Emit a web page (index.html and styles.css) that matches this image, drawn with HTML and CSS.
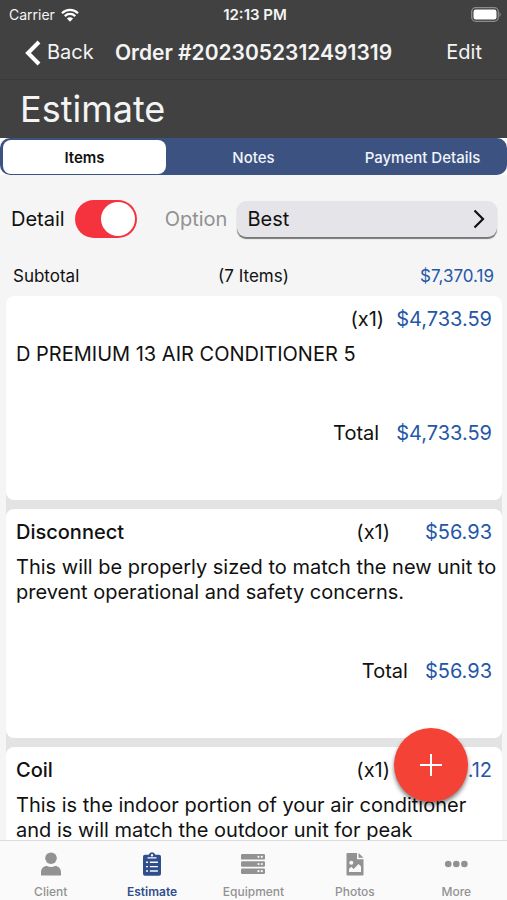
FILE: index.html
```html
<!DOCTYPE html>
<html lang="en">
<head>
<meta charset="utf-8">
<meta name="viewport" content="width=device-width, initial-scale=1">
<title>Estimate</title>
<link rel="stylesheet" href="styles.css">
</head>
<body>
<header class="header">
  <div class="status">
    <div class="carrier">
      <span>Carrier</span>
      <svg class="wifi" viewBox="0 0 18 14" aria-hidden="true">
        <path d="M1 5.2a11.4 11.4 0 0 1 16 0M3.8 8.1a7.4 7.4 0 0 1 10.4 0" fill="none" stroke="#fff" stroke-width="2.3"/>
        <path d="M9 13.8 5.9 10.6a4.4 4.4 0 0 1 6.2 0z" fill="#fff"/>
      </svg>
    </div>
    <time class="clock">12:13 PM</time>
    <svg class="battery" viewBox="0 0 30 15" aria-hidden="true">
      <rect x=".7" y=".7" width="26.6" height="13.6" rx="4" fill="none" stroke="#8c8c8c" stroke-width="1.3"/>
      <rect x="2.5" y="2.5" width="23" height="10" rx="2.2" fill="#fff"/>
      <path d="M28.5 5v5c1.6-.8 1.6-4.200 0-5z" fill="#8c8c8c"/>
    </svg>
  </div>
  <nav class="navbar">
    <a class="back" href="#back">
      <svg class="back-icon" viewBox="0 0 16 26" aria-hidden="true"><path d="M14 2 3 13l11 11" fill="none" stroke="#fff" stroke-width="4"/></svg>
      <span>Back</span>
    </a>
    <strong class="order">Order #2023052312491319</strong>
    <a class="edit" href="#edit">Edit</a>
  </nav>
  <h1 class="title">Estimate</h1>
</header>

<main class="content">
  <div class="segment-wrap">
    <div class="segments">
      <button class="segment segment-active" type="button">Items</button>
      <button class="segment" type="button">Notes</button>
      <button class="segment" type="button">Payment Details</button>
    </div>
  </div>

  <div class="options">
    <label class="detail" for="detail">Detail</label>
    <input class="switch" id="detail" type="checkbox" checked>
    <label class="option-label" for="option">Option</label>
    <div class="picker">
      <select id="option"><option>Best</option></select>
      <svg class="picker-icon" viewBox="0 0 12 20" aria-hidden="true"><path d="m1.500 1.500 8.500 8.500-8.500 8.500" fill="none" stroke="#111" stroke-width="2.2"/></svg>
    </div>
  </div>

  <div class="subtotal">
    <span>Subtotal</span>
    <span>(7 Items)</span>
    <span class="subtotal-price">$7,370.19</span>
  </div>

  <div class="cards">
    <article class="card">
      <div class="row"><span class="qty">(x1)</span><span class="price">$4,733.59</span></div>
      <p class="desc">D PREMIUM 13 AIR CONDITIONER 5</p>
      <div class="row total"><span>Total</span><span class="price">$4,733.59</span></div>
    </article>
    <article class="card">
      <div class="row"><h2 class="name">Disconnect</h2><span class="qty">(x1)</span><span class="price price-short">$56.93</span></div>
      <p class="desc">This will be properly sized to match the new unit to prevent operational and safety concerns.</p>
      <div class="row total"><span>Total</span><span class="price">$56.93</span></div>
    </article>
    <article class="card">
      <div class="row"><h2 class="name">Coil</h2><span class="qty">(x1)</span><span class="price price-short">.12</span></div>
      <p class="desc">This is the indoor portion of your air conditioner and is will match the outdoor unit for peak</p>
    </article>
  </div>
  <button class="add" type="button" aria-label="Add item">
    <svg viewBox="0 0 22 22" aria-hidden="true"><path d="M11 0v22M0 11h22" stroke="#fff" stroke-width="2"/></svg>
  </button>
</main>

<nav class="tabs">
  <a class="tab" href="#client">
    <svg viewBox="0 0 24 24" aria-hidden="true"><circle cx="12" cy="6.200" r="5.800"/><path d="M2 23.500v-3.200C2 16.500 4.500 14 8 14c2.500 1.300 5.500 1.300 8 0 3.500 0 6 2.500 6 6.300v3.200z"/></svg>
    <span>Client</span>
  </a>
  <a class="tab tab-active" href="#estimate">
    <svg viewBox="0 0 24 24" aria-hidden="true">
      <path fill-rule="evenodd" d="M5 2.800h3.700a3.400 3.400 0 0 1 6.600 0H19A2 2 0 0 1 21 4.800v17a2 2 0 0 1-2 2H5a2 2 0 0 1-2-2v-17a2 2 0 0 1 2-2zM12 2a1.200 1.200 0 1 0 0 2.400A1.200 1.200 0 0 0 12 2z"/>
      <path d="M7.500 5.900h9M9.900 10.200h8M9.900 14.600h8M9.900 19h8M6 10.200h2M6 14.600h2M6 19h2" stroke="#fafafa" stroke-width="1.400"/>
    </svg>
    <span>Estimate</span>
  </a>
  <a class="tab" href="#equipment">
    <svg viewBox="0 0 24 24" aria-hidden="true">
      <rect x="0" y="2" width="24" height="5.600" rx="1.200"/><rect x="0" y="9.200" width="24" height="5.600" rx="1.200"/><rect x="0" y="16.400" width="24" height="5.600" rx="1.200"/>
      <g fill="#fafafa"><circle cx="17.500" cy="4.800" r="1.100"/><circle cx="20.800" cy="4.800" r="1.100"/><circle cx="17.500" cy="12" r="1.100"/><circle cx="20.800" cy="12" r="1.100"/><circle cx="17.500" cy="19.200" r="1.100"/><circle cx="20.800" cy="19.200" r="1.100"/></g>
    </svg>
    <span>Equipment</span>
  </a>
  <a class="tab" href="#photos">
    <svg viewBox="0 0 24 24" aria-hidden="true">
      <path d="M4.500 1H14v6.200h6.500v15.300a1 1 0 0 1-1 1h-15a1 1 0 0 1-1-1V2a1 1 0 0 1 1-1z"/><path d="M15.500 1v4.800h5z"/>
      <circle cx="8.300" cy="10.800" r="2" fill="#fafafa"/><path d="M6 20v-3l2.300-2.300 2.300 2.300 5-5 2.400 2.400V20z" fill="#fafafa"/>
    </svg>
    <span>Photos</span>
  </a>
  <a class="tab" href="#more">
    <svg viewBox="0 0 24 24" aria-hidden="true"><circle cx="4.200" cy="12" r="3.300"/><circle cx="12.300" cy="12" r="3.300"/><circle cx="20.400" cy="12" r="3.300"/></svg>
    <span>More</span>
  </a>
</nav>
</body>
</html>
```
FILE: styles.css
```css
* { box-sizing: border-box; }

body {
  margin: 0;
  height: 100vh;
  display: flex;
  flex-direction: column;
  overflow: hidden;
  background: #f5f5f5;
  color: #111;
  font-family: Inter, "Liberation Sans", sans-serif;
  font-size: 20px;
  line-height: 25px;
}

a { color: inherit; text-decoration: none; }
button, select { font: inherit; }

.header { flex: none; background: #414141; color: #f4f4f4; }

.status {
  height: 26px;
  padding: 2px 6px 0 9px;
  display: grid;
  grid-template-columns: 1fr auto 1fr;
  align-items: center;
  font-size: 14px;
}
.carrier { display: flex; align-items: center; gap: 6px; }
.wifi { width: 18px; height: 14px; }
.clock { font-size: 15px; font-weight: 600; }
.battery { width: 30px; height: 15px; justify-self: end; }

.navbar {
  height: 54px;
  padding: 0 25px;
  display: grid;
  grid-template-columns: 1fr auto 1fr;
  align-items: center;
  border-bottom: 1px solid #3a3a3a;
}
.back { display: flex; align-items: center; gap: 6px; }
.back-icon { width: 16px; height: 26px; }
.order { font-size: 21px; font-weight: 600; }
.edit { justify-self: end; }

.title {
  margin: 0;
  padding: 5px 20px;
  font-size: 36px;
  line-height: 48px;
  font-weight: 400;
}

.content { flex: 1; min-height: 0; position: relative; }

.segment-wrap { background: #fff; }
.segments {
  display: grid;
  grid-template-columns: repeat(3, 1fr);
  padding: 2px 0 1px;
  border-radius: 10px;
  background: #3c5382;
}
.segment {
  height: 34px;
  padding: 0;
  border: 0;
  border-radius: 8px;
  background: none;
  color: #f1f4fa;
  font-size: 15px;
  font-weight: 500;
}
.segment-active { margin: 0 3px; background: #fff; color: #111; font-weight: 600; }

.options {
  display: flex;
  align-items: center;
  padding: 25px 10px 0 11px;
}
.detail { margin-right: 10px; }
.switch {
  appearance: none;
  width: 62px;
  height: 38px;
  margin: 0 28px 0 0;
  padding: 2px;
  border-radius: 19px;
  background: #f5333f;
  display: flex;
  justify-content: flex-end;
}
.switch::before {
  content: "";
  width: 34px;
  height: 34px;
  border-radius: 50%;
  background: #fff;
}
.option-label { margin-right: 10px; color: #919191; }
.picker {
  flex: 1;
  display: grid;
  align-items: center;
  border-radius: 9px;
  background: #e5e4e8;
  box-shadow: 0 2px 1px #777;
}
.picker select {
  grid-area: 1 / 1;
  appearance: none;
  width: 100%;
  height: 36px;
  padding: 0 10px;
  border: 0;
  background: none;
  color: #111;
}
.picker-icon {
  grid-area: 1 / 1;
  justify-self: end;
  width: 12px;
  height: 20px;
  margin-right: 12px;
  pointer-events: none;
}

.subtotal {
  display: grid;
  grid-template-columns: 1fr auto 1fr;
  padding: 26px 13px 7px;
  font-size: 17px;
}
.subtotal-price { justify-self: end; color: #2557a7; }

.cards {
  margin: 0 5px 0 6px;
  display: grid;
  gap: 9px;
  background: #e3e3e3;
  border-radius: 9px;
}
.card {
  padding: 11px 0 54px 10px;
  border-radius: 8px;
  background: #fff;
}
.row { display: flex; justify-content: flex-end; padding-right: 10px; }
.name { margin: 0 auto 0 0; font-size: 20px; font-weight: 500; }
.price { margin-left: 12px; color: #2557a7; }
.price-short { min-width: 90px; text-align: right; }
.desc { margin: 10px 0 0; }
.total { margin-top: 54px; }
.total .price { margin-left: 17px; }

.add {
  position: absolute;
  right: 39px;
  bottom: 38px;
  width: 74px;
  height: 74px;
  padding: 0;
  border: 0;
  border-radius: 50%;
  background: #f44336;
  box-shadow: 0 3px 4px rgba(0, 0, 0, .5);
  display: grid;
  place-items: center;
}
.add svg { width: 22px; height: 22px; }

.tabs {
  flex: none;
  height: 60px;
  position: relative;
  display: grid;
  grid-template-columns: repeat(5, 1fr);
  border-top: 1px solid #dcdcdc;
  background: #fafafa;
}
.tab {
  display: flex;
  flex-direction: column;
  align-items: center;
  gap: 8px;
  padding-top: 11px;
  color: #929292;
  font-size: 12px;
  line-height: 16px;
  font-weight: 500;
}
.tab svg { width: 24px; height: 24px; fill: currentColor; }
.tab-active { color: #2f4f8c; font-weight: 600; }
```
